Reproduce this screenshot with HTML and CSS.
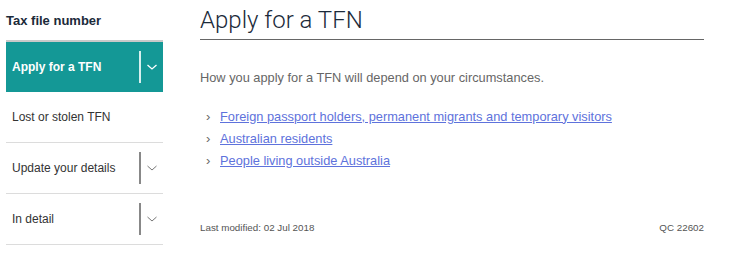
FILE: index.html
```html
<!DOCTYPE html>
<html lang="en">
<head>
<meta charset="utf-8">
<title>Apply for a TFN</title>
<link rel="stylesheet" href="styles.css">
</head>
<body>
<div class="page">
  <nav class="sidebar">
    <h2 class="side-title">Tax file number</h2>
    <ul class="side-list">
      <li class="side-item active">
        <span class="side-label">Apply for a TFN</span>
        <span class="toggle"><svg width="12" height="8" viewBox="0 0 12 8"><path d="M1.5 2 L6 6 L10.5 2" fill="none" stroke="currentColor" stroke-width="1.3"/></svg></span>
      </li>
      <li class="side-item">
        <span class="side-label">Lost or stolen TFN</span>
      </li>
      <li class="side-item">
        <span class="side-label">Update your details</span>
        <span class="toggle"><svg width="12" height="8" viewBox="0 0 12 8"><path d="M1.5 2 L6 6 L10.5 2" fill="none" stroke="currentColor" stroke-width="1"/></svg></span>
      </li>
      <li class="side-item">
        <span class="side-label">In detail</span>
        <span class="toggle"><svg width="12" height="8" viewBox="0 0 12 8"><path d="M1.5 2 L6 6 L10.5 2" fill="none" stroke="currentColor" stroke-width="1"/></svg></span>
      </li>
    </ul>
  </nav>
  <main class="content">
    <h1 class="title">Apply for a TFN</h1>
    <p class="intro">How you apply for a TFN will depend on your circumstances.</p>
    <ul class="links">
      <li><a href="#">Foreign passport holders, permanent migrants and temporary visitors</a></li>
      <li><a href="#">Australian residents</a></li>
      <li><a href="#">People living outside Australia</a></li>
    </ul>
    <footer class="meta">
      <span>Last modified: 02 Jul 2018</span>
      <span>QC 22602</span>
    </footer>
  </main>
</div>
</body>
</html>
```
FILE: styles.css
```css
html, body {
  margin: 0;
  padding: 0;
  background: #fff;
}
body {
  font-family: "Liberation Sans", Arial, sans-serif;
  color: #333;
}
.page {
  display: flex;
  align-items: flex-start;
  padding-left: 6px;
}
.sidebar {
  width: 157px;
  flex: none;
}
.side-title {
  margin: 0;
  height: 40px;
  padding-top: 13px;
  box-sizing: border-box;
  font-size: 13px;
  font-weight: bold;
  color: #1b2a3a;
  line-height: 15px;
}
.side-list {
  list-style: none;
  margin: 0;
  padding: 0;
}
.side-item {
  display: flex;
  align-items: center;
  justify-content: space-between;
  height: 50px;
  border-bottom: 1px solid #dcdcdc;
  font-size: 12px;
  color: #333;
}
.side-item.active {
  background: #149896;
  color: #fff;
  font-weight: bold;
  height: 50px;
  border-top: 2px solid #c9c9c9;
  border-bottom: none;
}
.side-label {
  padding-left: 6px;
}
.toggle {
  display: flex;
  align-items: center;
  justify-content: center;
  width: 22px;
  height: 32px;
  border-left: 2px solid #888;
  color: #777;
}
.side-item.active .toggle {
  border-left-color: #d7efee;
  color: #fff;
}
.content {
  margin-left: 37px;
  width: 504px;
}
.title {
  margin: 0;
  height: 40px;
  padding-top: 5px;
  box-sizing: border-box;
  border-bottom: 1px solid #666;
  font-family: Roboto, "Liberation Sans", sans-serif;
  font-weight: 300;
  font-size: 24px;
  line-height: 30px;
  color: #1b2a3a;
}
.intro {
  margin: 30px 0 0;
  font-size: 12.8px;
  line-height: 16px;
  color: #666;
}
.links {
  list-style: none;
  margin: 19px 0 0;
  padding: 0;
}
.links li {
  display: flex;
  align-items: center;
  height: 22px;
  font-size: 12.8px;
}
.links li::before {
  content: "\203A";
  width: 20px;
  padding-left: 6px;
  box-sizing: border-box;
  color: #666;
  font-size: 13px;
}
.links a {
  color: #5e72dc;
  text-decoration: underline;
}
.meta {
  display: flex;
  justify-content: space-between;
  margin-top: 51px;
  font-size: 9.8px;
  color: #555;
}
```
